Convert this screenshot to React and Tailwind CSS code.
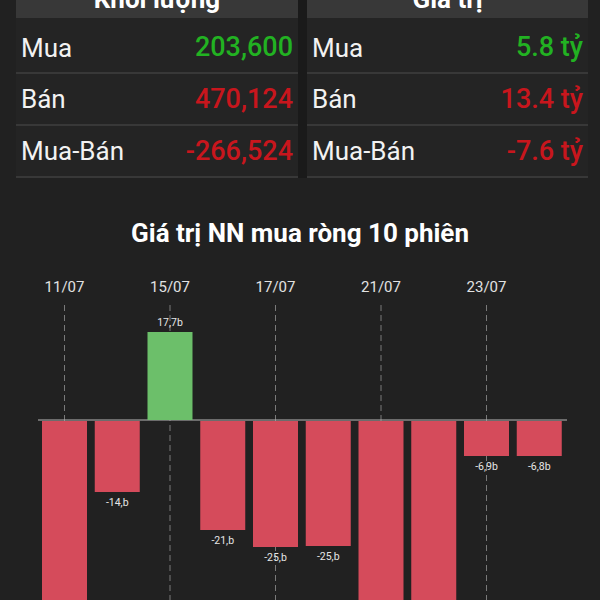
import React from "react";

const rowsLeft = [
  { label: "Mua", value: "203,600", color: "text-[#22b222]" },
  { label: "Bán", value: "470,124", color: "text-[#c8161d]" },
  { label: "Mua-Bán", value: "-266,524", color: "text-[#c8161d]" },
];
const rowsRight = [
  { label: "Mua", value: "5.8 tỷ", color: "text-[#22b222]" },
  { label: "Bán", value: "13.4 tỷ", color: "text-[#c8161d]" },
  { label: "Mua-Bán", value: "-7.6 tỷ", color: "text-[#c8161d]" },
];

function Card({ title, rows, width }) {
  return (
    <div className={`flex flex-col bg-[#242424] ${width}`}>
      <div className="h-[18px] bg-[#383838] overflow-hidden text-center">
        <div className="text-[26px] font-bold leading-[30px] mt-[-16px] text-white">{title}</div>
      </div>
      {rows.map((r, i) => (
        <div
          key={r.label}
          className={`flex items-center justify-between px-[5px] border-b-[2px] border-[#383838] ${i === 0 ? "h-[56px] pt-[5px]" : "h-[52px]"}`}
        >
          <span className="text-[26px] text-[#f2f2f2] leading-none">{r.label}</span>
          <span className={`text-[27px] font-medium leading-none ${r.color}`}>{r.value}</span>
        </div>
      ))}
    </div>
  );
}

const O = 247;
const ZERO = 420 - O;
const bars = [
  { h: -260, label: null },
  { h: -71, label: "-14,b" },
  { h: 88, label: "17,7b" },
  { h: -109, label: "-21,b" },
  { h: -126, label: "-25,b" },
  { h: -125, label: "-25,b" },
  { h: -260, label: null },
  { h: -260, label: null },
  { h: -35, label: "-6,9b" },
  { h: -35, label: "-6,8b" },
];
const dates = [
  { i: 0, t: "11/07" },
  { i: 2, t: "15/07" },
  { i: 4, t: "17/07" },
  { i: 6, t: "21/07" },
  { i: 8, t: "23/07" },
];
const X0 = 42;
const PITCH = 52.75;
const BW = 45;

function Chart() {
  return (
    <svg width="600" height={600 - O} className="block" style={{ fontFamily: "Roboto, sans-serif" }}>
      {dates.map((d) => {
        const cx = X0 + d.i * PITCH + BW / 2;
        return (
          <g key={d.t}>
            <text x={cx} y={292 - O} textAnchor="middle" fontSize="15" fill="#e2e2e2">
              {d.t}
            </text>
            <line x1={cx} x2={cx} y1={305 - O} y2={600 - O} stroke="#7a7a7a" strokeWidth="1" strokeDasharray="6 4" />
          </g>
        );
      })}
      <line x1="38" x2="567" y1={ZERO} y2={ZERO} stroke="#b8b8b8" strokeWidth="1" />
      {bars.map((b, i) => {
        const x = X0 + i * PITCH;
        const pos = b.h > 0;
        const y = pos ? ZERO - b.h : ZERO + 1;
        const h = Math.abs(b.h);
        return (
          <g key={i}>
            <rect x={x} y={y} width={BW} height={h} fill={pos ? "#6cbf6a" : "#d54b5b"} />
            {b.label && (
              <text
                x={x + BW / 2}
                y={pos ? ZERO - b.h - 6 : ZERO + h + 15}
                textAnchor="middle"
                fontSize="10.5"
                fill="#e6e6e6"
              >
                {b.label}
              </text>
            )}
          </g>
        );
      })}
    </svg>
  );
}

export default function App() {
  return (
    <div className="w-[600px] h-[600px] bg-[#212121] overflow-hidden font-['Roboto',sans-serif]">
      <div className="flex pl-[16px]">
        <Card title="Khối lượng" rows={rowsLeft} width="w-[282px]" />
        <div className="w-[9px] h-[178px] bg-[#1a1a1a]" />
        <Card title="Giá trị" rows={rowsRight} width="w-[281px]" />
      </div>
      <div className="mt-[41px] text-center text-[26px] font-bold leading-[28px] text-white">
        Giá trị NN mua ròng 10 phiên
      </div>
      <Chart />
    </div>
  );
}
